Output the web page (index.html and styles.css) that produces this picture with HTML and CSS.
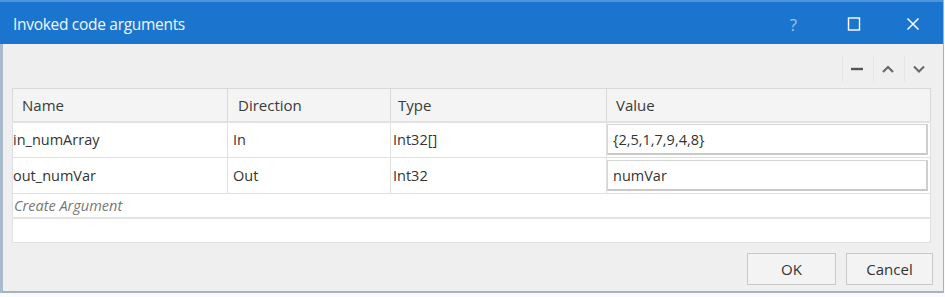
FILE: index.html
```html
<!DOCTYPE html>
<html lang="en">
<head>
  <meta charset="UTF-8">
  <title>Invoked code arguments</title>
  <link rel="stylesheet" href="styles.css">
</head>
<body>
  <div class="window">
    <div class="titlebar">
      <span class="title">Invoked code arguments</span>
      <div class="controls">
        <span class="ctl help">?</span>
        <span class="ctl">
          <svg width="14" height="14" viewBox="0 0 14 14"><rect x="1.5" y="1" width="11" height="12" fill="none" stroke="#fff" stroke-width="1.4"/></svg>
        </span>
        <span class="ctl">
          <svg width="14" height="14" viewBox="0 0 14 14"><path d="M1.5 1.5 L12.5 12.5 M12.5 1.5 L1.5 12.5" stroke="#fff" stroke-width="1.5"/></svg>
        </span>
      </div>
    </div>

    <div class="content">
      <div class="toolbar">
        <span class="tool">
          <svg width="14" height="14" viewBox="0 0 14 14"><path d="M1 7 H13" stroke="#555" stroke-width="2.4"/></svg>
        </span>
        <span class="tool">
          <svg width="14" height="14" viewBox="0 0 14 14"><path d="M2 10 L7 5 L12 10" fill="none" stroke="#666" stroke-width="2"/></svg>
        </span>
        <span class="tool">
          <svg width="14" height="14" viewBox="0 0 14 14"><path d="M2 4.5 L7 9.5 L12 4.5" fill="none" stroke="#666" stroke-width="2"/></svg>
        </span>
      </div>

      <table class="args">
        <thead>
          <tr class="head">
            <th class="c-name">Name</th>
            <th class="c-dir">Direction</th>
            <th class="c-type">Type</th>
            <th class="c-val">Value</th>
          </tr>
        </thead>
        <tbody>
          <tr class="arg">
            <td class="name">in_numArray</td>
            <td class="dir">In</td>
            <td class="type">Int32[]</td>
            <td class="value"><div class="box">{2,5,1,7,9,4,8}</div></td>
          </tr>
          <tr class="arg">
            <td class="name">out_numVar</td>
            <td class="dir">Out</td>
            <td class="type">Int32</td>
            <td class="value"><div class="box">numVar</div></td>
          </tr>
          <tr class="create">
            <td colspan="4">Create Argument</td>
          </tr>
          <tr class="empty">
            <td colspan="4"></td>
          </tr>
        </tbody>
      </table>

      <div class="footer">
        <button class="btn">OK</button>
        <button class="btn">Cancel</button>
      </div>
    </div>
  </div>
</body>
</html>
```

FILE: styles.css
```css
body {
  margin: 0;
  background: #fbfbfb;
  font-family: "Open Sans", "Noto Sans", sans-serif;
  font-size: 14.5px;
  color: #333;
}

.window {
  width: 944px;
  height: 293px;
  border: 1px solid #9fb2c6;
  border-left: 3px solid #a9bacb;
  border-bottom: 2px solid #a5b4c4;
  border-top: 0;
  background: #efefef;
  display: flex;
  flex-direction: column;
  box-sizing: border-box;
}

.titlebar {
  height: 44px;
  flex: none;
  background: #1b75cf;
  border-top: 2px solid #4b95dc;
  box-sizing: border-box;
  display: flex;
  align-items: center;
  justify-content: space-between;
  padding: 2px 0 0 10px;
  margin-left: -3px;
}

.title {
  color: #f2f7fc;
  font-size: 15.5px;
  letter-spacing: -0.3px;
  padding-left: 3px;
}

.controls {
  display: flex;
  height: 100%;
  margin-right: 1px;
}

.ctl {
  width: 59px;
  display: flex;
  align-items: center;
  justify-content: center;
  color: #cfe2f5;
  font-size: 17px;
}

.ctl.help {
  color: #9fc4ea;
  width: 61px;
}

.content {
  flex: 1;
  display: flex;
  flex-direction: column;
  padding: 0 10px 0 9px;
}

.toolbar {
  display: flex;
  justify-content: flex-end;
  gap: 2px;
  padding: 11px 0 0;
  height: 44px;
  box-sizing: border-box;
  flex: none;
}

.tool {
  width: 28px;
  height: 27px;
  display: flex;
  align-items: center;
  justify-content: center;
  border-left: 1px solid #e6e6e6;
}

.args {
  width: 919px;
  border-collapse: collapse;
  background: #fff;
  border: 1px solid #dcdcdc;
  table-layout: fixed;
  flex: none;
}

.args td,
.args th {
  padding-top: 0;
  padding-bottom: 0;
  box-sizing: border-box;
  white-space: nowrap;
}

.head { height: 33px; }
.arg { height: 36px; }
.create { height: 24px; }
.empty { height: 25px; }

.args th {
  background: #f4f4f4;
  font-weight: normal;
  text-align: left;
  padding-left: 9px;
  border: 1px solid #d8d8d8;
  border-bottom: 2px solid #e2e2e2;
  color: #3a3a3a;
  font-size: 15px;
}

.args .c-name { width: 215px; }
.args .c-dir { width: 163px; padding-left: 10px; }
.args .c-type { width: 216px; padding-left: 7px; }

.arg td {
  border: 1px solid #e0e0e0;
  color: #333;
}

.arg .name { padding-left: 0; }
.arg .dir { padding-left: 5px; }
.arg .type { padding-left: 2px; }

.arg td.value {
  padding: 0 2px 0 0;
}

.box {
  height: 31px;
  border: 1px solid #d4d4d4;
  border-bottom: 2px solid #c9c9c9;
  border-right: 2px solid #cfcfcf;
  box-sizing: border-box;
  display: flex;
  align-items: center;
  padding-left: 5px;
  background: #fff;
}

.create td {
  padding-left: 1px;
  font-style: italic;
  color: #777;
  border: 1px solid #e0e0e0;
  border-bottom: 2px solid #e4e4e4;
}

.empty td {
  border: 1px solid #e0e0e0;
}

.footer {
  display: flex;
  justify-content: flex-end;
  gap: 10px;
  padding-top: 10px;
}

.btn {
  height: 32px;
  width: 89px;
  border: 1px solid #c8c8c8;
  background: #f3f3f3;
  font-family: inherit;
  font-size: 15px;
  color: #333;
}

.btn + .btn {
  width: 87px;
}
```
